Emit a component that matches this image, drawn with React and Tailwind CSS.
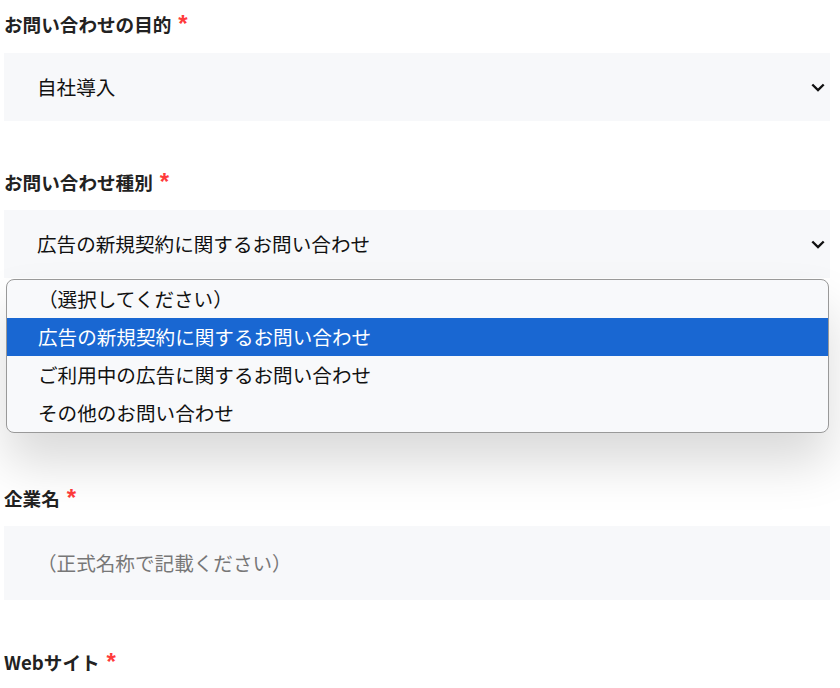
import React from "react";

const font = { fontFamily: '"Noto Sans CJK JP", "Noto Sans", sans-serif' };

function Label({ children }) {
  return (
    <div className="flex items-start h-[24px] text-[18.6px] leading-[24px] font-bold text-[#222]">
      <span>{children}</span>
      <span className="ml-[7px] text-[#ff3b3b] text-[24px] leading-[24px] font-bold" style={{ fontFamily: '"Liberation Sans", sans-serif' }}>*</span>
    </div>
  );
}

function Chevron() {
  return (
    <svg width="14" height="9" viewBox="0 0 14 9" className="shrink-0">
      <path d="M1.3 1.5 L7 7 L12.7 1.5" fill="none" stroke="#111" strokeWidth="2.4" />
    </svg>
  );
}

export default function App() {
  const options = [
    "（選択してください）",
    "広告の新規契約に関するお問い合わせ",
    "ご利用中の広告に関するお問い合わせ",
    "その他のお問い合わせ",
  ];
  return (
    <div className="w-[840px] h-[688px] bg-white overflow-hidden" style={font}>
      <div className="relative ml-[4px] w-[826px] pt-[12px]">
        <Label>お問い合わせの目的</Label>
        <div className="mt-[17px] h-[68px] bg-[#f7f8fa] flex items-center justify-between pl-[33px] pr-[5px]">
          <span className="text-[19.6px] text-[#111]">自社導入</span>
          <Chevron />
        </div>

        <div className="mt-[49px]">
          <Label>お問い合わせ種別</Label>
        </div>
        <div className="mt-[16px] h-[68px] bg-[#f7f8fa] flex items-center justify-between pl-[33px] pr-[5px]">
          <span className="text-[19.6px] text-[#111]">広告の新規契約に関するお問い合わせ</span>
          <Chevron />
        </div>

        <div className="h-[208px]" />

        <Label>企業名</Label>
        <div className="mt-[16px] h-[74px] bg-[#f7f8fa] flex items-center pl-[33px]">
          <span className="text-[19.6px] text-[#777]">（正式名称で記載ください）</span>
        </div>

        <div className="mt-[50px]">
          <Label>Webサイト</Label>
        </div>

        <div className="absolute left-[2px] top-[279px] w-[823px] rounded-[8px] border border-[#999] bg-[#f8f9fb] overflow-hidden shadow-[0_30px_50px_rgba(0,0,0,0.15)]">
          {options.map((o, i) => (
            <div
              key={i}
              className={
                "h-[38px] flex items-center pl-[31px] text-[19.6px] " +
                (i === 1 ? "bg-[#1967d2] text-white" : "text-[#111]")
              }
            >
              {o}
            </div>
          ))}
        </div>
      </div>
    </div>
  );
}
